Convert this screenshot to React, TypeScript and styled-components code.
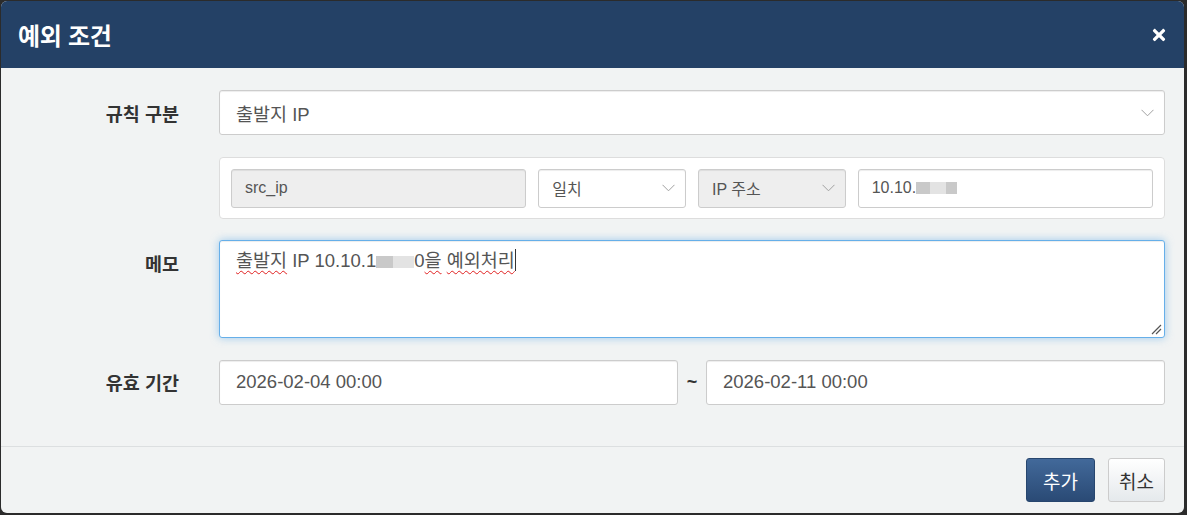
import React from 'react';
import styled, { createGlobalStyle } from 'styled-components';
import { FaTimes } from 'react-icons/fa';

const GlobalStyle = createGlobalStyle`
  html, body {
    margin: 0;
    padding: 0;
    background: #2b2b2b;
  }
  * {
    box-sizing: border-box;
  }
  body {
    font-family: "Liberation Sans", "Noto Sans CJK KR", sans-serif;
  }
`;

const Backdrop = styled.div`
  padding: 1px 3px 2px 1px;
  height: 515px;
`;

const Modal = styled.div`
  background: #f1f3f3;
  border-radius: 6px;
  overflow: hidden;
  display: flex;
  flex-direction: column;
  height: 512px;
`;

const Header = styled.div`
  background: #244166;
  height: 67px;
  padding: 0 16px 0 17px;
  display: flex;
  align-items: center;
  justify-content: space-between;
`;

const Title = styled.h4`
  margin: 0;
  color: #fff;
  font-size: 24px;
  font-weight: bold;
  letter-spacing: -0.3px;
`;

const CloseButton = styled.button`
  border: 0;
  background: none;
  padding: 0;
  color: #fff;
  display: flex;
  cursor: pointer;
`;

const Body = styled.div`
  flex: 1;
  padding: 22px 19px 0 20px;
  display: grid;
  grid-template-columns: 158px 1fr;
  column-gap: 40px;
  row-gap: 21.5px;
  align-content: start;
`;

const Label = styled.label`
  height: 45px;
  display: flex;
  align-items: center;
  justify-content: flex-end;
  font-size: 18.5px;
  font-weight: bold;
  color: #333;
`;

const Field = styled.div<{ $small?: boolean; $disabled?: boolean }>`
  position: relative;
  height: ${(p) => (p.$small ? '39px' : '45px')};
  padding: 0 ${(p) => (p.$small ? '13px' : '16px')};
  display: flex;
  align-items: center;
  background: ${(p) => (p.$disabled ? '#eeeeee' : '#fff')};
  border: 1px solid #cccccc;
  border-radius: 3px;
  box-shadow: inset 0 1px 1px rgba(0, 0, 0, 0.075);
  font-size: ${(p) => (p.$small ? '16px' : '18.5px')};
  color: #555;
  white-space: nowrap;
`;

const Chevron = styled.svg`
  position: absolute;
  right: 10px;
  top: 50%;
  margin-top: -4px;
`;

const ConditionPanel = styled.div`
  background: #fff;
  border: 1px solid #dddddd;
  border-radius: 4px;
  padding: 11px 11px 10px;
  display: grid;
  grid-template-columns: 2fr 1fr 1fr 2fr;
  gap: 12px;
`;

const Mask = styled.span<{ $w: number; $light?: boolean }>`
  display: inline-block;
  width: ${(p) => p.$w}px;
  height: 12px;
  background: ${(p) => (p.$light ? '#e3e3e3' : '#c9c9c9')};
  vertical-align: -1px;
`;

const MemoBox = styled.div`
  position: relative;
  height: 98px;
  padding: 7px 16px;
  background: #fff;
  border: 1px solid #66afe9;
  border-radius: 3px;
  box-shadow: inset 0 1px 1px rgba(0, 0, 0, 0.075), 0 0 8px rgba(102, 175, 233, 0.6);
  font-size: 18.5px;
  line-height: 26px;
  color: #555;
`;

const Misspelled = styled.span`
  text-decoration: underline wavy #e02020;
  text-decoration-thickness: 1px;
  text-underline-offset: 3px;
`;

const Caret = styled.span`
  display: inline-block;
  width: 1px;
  height: 22px;
  background: #333;
  vertical-align: -4px;
`;

const Grip = styled.svg`
  position: absolute;
  right: 2px;
  bottom: 2px;
`;

const PeriodRow = styled.div`
  display: grid;
  grid-template-columns: 1fr 28px 1fr;
  align-items: center;
`;

const Tilde = styled.span`
  text-align: center;
  font-size: 18px;
  font-weight: bold;
  color: #333;
`;

const Footer = styled.div`
  height: 67px;
  border-top: 1px solid #dcdfe0;
  padding: 0 19px;
  display: flex;
  align-items: center;
  justify-content: flex-end;
  gap: 13px;
`;

const Button = styled.button<{ $primary?: boolean }>`
  height: 44px;
  padding: 0 ${(p) => (p.$primary ? '16px' : '10px')};
  border-radius: 3px;
  font-family: inherit;
  font-size: 19px;
  cursor: pointer;
  color: ${(p) => (p.$primary ? '#fff' : '#333')};
  border: 1px solid ${(p) => (p.$primary ? '#27466e' : '#cccccc')};
  background: ${(p) =>
    p.$primary
      ? 'linear-gradient(to bottom, #42699a 0%, #2a4a75 100%)'
      : 'linear-gradient(to bottom, #ffffff 0%, #e5e9ec 100%)'};
`;

const ChevronDown = () => (
  <Chevron width="13" height="8" viewBox="0 0 13 8">
    <path d="M0.5 0.8 L6.5 6.8 L12.5 0.8" fill="none" stroke="#a0a0a0" strokeWidth="1" />
  </Chevron>
);

const App = () => {
  return (
    <>
      <GlobalStyle />
      <Backdrop>
        <Modal>
          <Header>
            <Title>예외 조건</Title>
            <CloseButton aria-label="닫기">
              <FaTimes size={18} />
            </CloseButton>
          </Header>

          <Body>
            <Label>규칙 구분</Label>
            <Field>
              출발지 IP
              <ChevronDown />
            </Field>

            <div />
            <ConditionPanel>
              <Field $small $disabled>src_ip</Field>
              <Field $small>
                일치
                <ChevronDown />
              </Field>
              <Field $small $disabled>
                IP 주소
                <ChevronDown />
              </Field>
              <Field $small>
                10.10.
                <Mask $w={14} />
                <Mask $w={16} $light />
                <Mask $w={11} />
              </Field>
            </ConditionPanel>

            <Label>메모</Label>
            <MemoBox>
              <Misspelled>출발지</Misspelled> IP 10.10.1
              <Mask $w={17} />
              <Mask $w={21} $light />
              0<Misspelled>을</Misspelled> <Misspelled>예외처리</Misspelled>
              <Caret />
              <Grip width="11" height="11" viewBox="0 0 11 11">
                <path d="M10 1 L1 10 M10 5 L5 10" stroke="#555" strokeWidth="1.2" />
              </Grip>
            </MemoBox>

            <Label>유효 기간</Label>
            <PeriodRow>
              <Field>2026-02-04 00:00</Field>
              <Tilde>~</Tilde>
              <Field>2026-02-11 00:00</Field>
            </PeriodRow>
          </Body>

          <Footer>
            <Button $primary>추가</Button>
            <Button>취소</Button>
          </Footer>
        </Modal>
      </Backdrop>
    </>
  );
};

export default App;
